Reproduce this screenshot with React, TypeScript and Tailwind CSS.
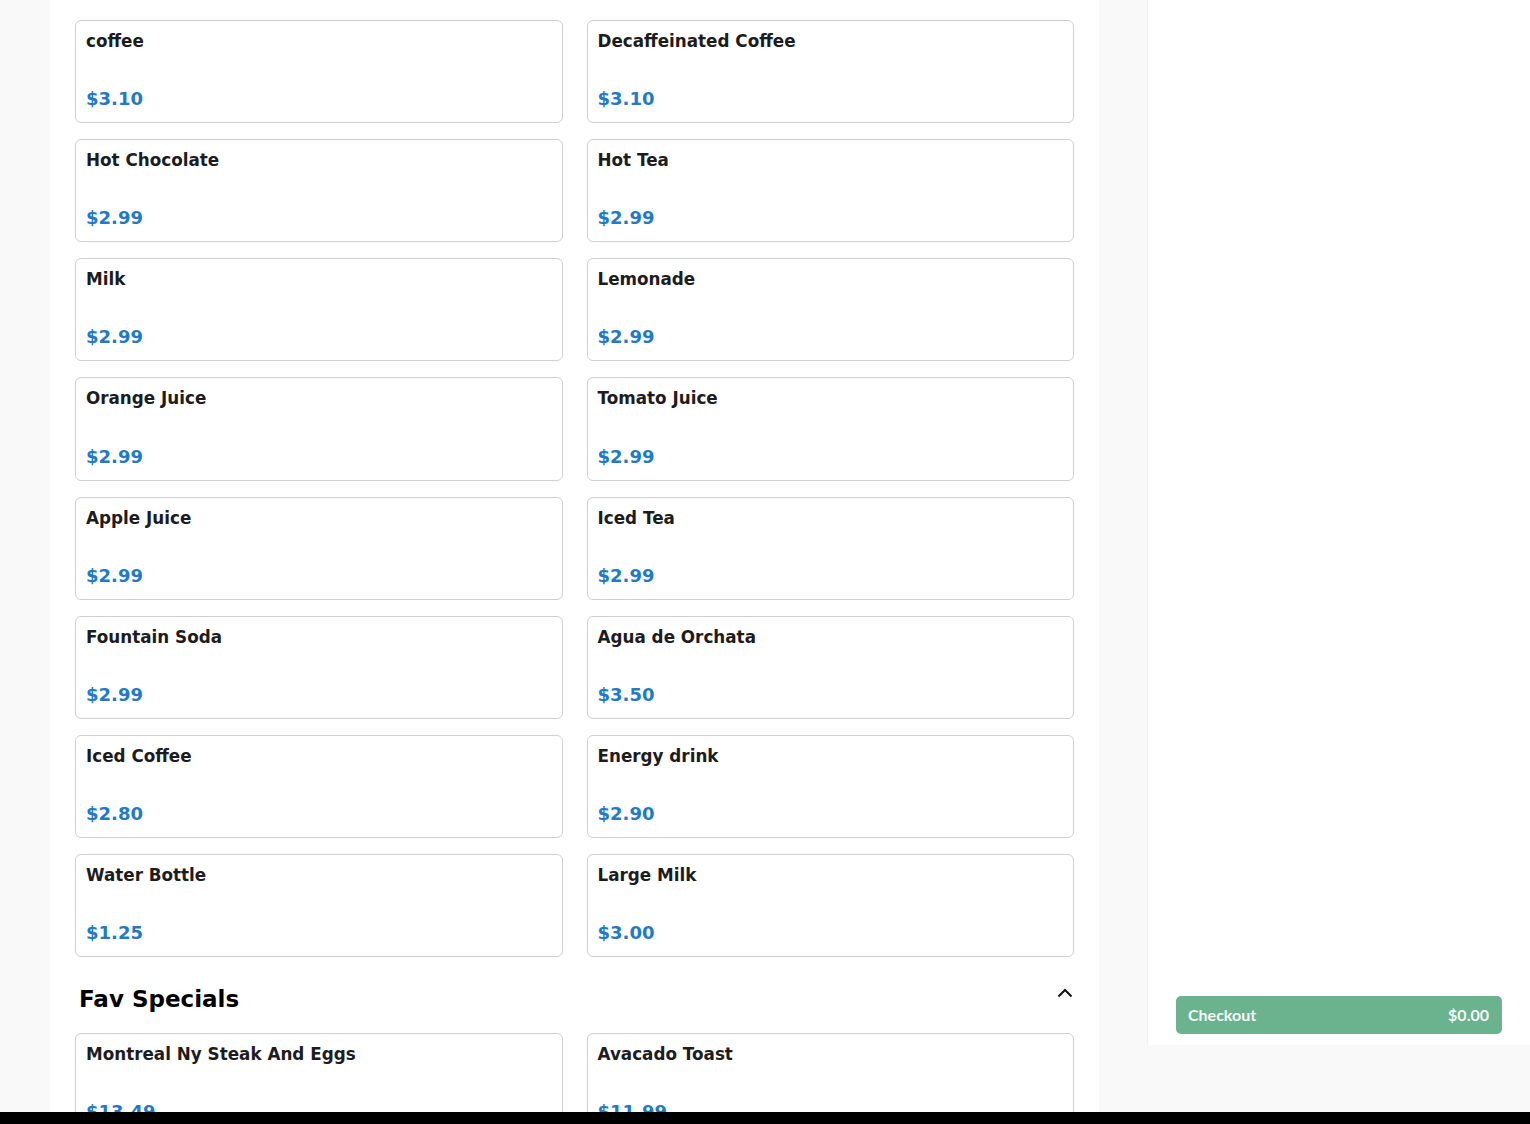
import { ReactNode } from 'react';

const drinks = [
  { name: 'coffee', price: '$3.10' },
  { name: 'Decaffeinated Coffee', price: '$3.10' },
  { name: 'Hot Chocolate', price: '$2.99' },
  { name: 'Hot Tea', price: '$2.99' },
  { name: 'Milk', price: '$2.99' },
  { name: 'Lemonade', price: '$2.99' },
  { name: 'Orange Juice', price: '$2.99' },
  { name: 'Tomato Juice', price: '$2.99' },
  { name: 'Apple Juice', price: '$2.99' },
  { name: 'Iced Tea', price: '$2.99' },
  { name: 'Fountain Soda', price: '$2.99' },
  { name: 'Agua de Orchata', price: '$3.50' },
  { name: 'Iced Coffee', price: '$2.80' },
  { name: 'Energy drink', price: '$2.90' },
  { name: 'Water Bottle', price: '$1.25' },
  { name: 'Large Milk', price: '$3.00' },
];

const specials = [
  { name: 'Montreal Ny Steak And Eggs', price: '$13.49' },
  { name: 'Avacado Toast', price: '$11.99' },
];

function ItemCard({ name, price }: { name: string; price: string }) {
  return (
    <button className="h-[103.15px] flex flex-col justify-between text-left bg-white border border-[#cfcfcf] rounded-[6px] px-[10px] pt-[8px] pb-[11px]">
      <span className="text-[16.8px] leading-[24px] font-bold text-[#1c1c1e]">{name}</span>
      <span className="text-[18px] leading-[24px] font-bold text-[#2279c8]">{price}</span>
    </button>
  );
}

function Grid({ children }: { children: ReactNode }) {
  return <div className="grid grid-cols-2 gap-x-[24px] gap-y-[16px]">{children}</div>;
}

export default function App() {
  return (
    <div className="h-screen flex flex-col bg-[#f9f9f9]" style={{ fontFamily: '"DejaVu Sans", sans-serif' }}>
      <div className="flex-1 min-h-0 flex">
        <div className="w-[50px] shrink-0" />
        <main className="w-[1049px] shrink-0 bg-white px-[25px] pt-[20px] overflow-hidden">
          <Grid>
            {drinks.map((d) => (
              <ItemCard key={d.name} {...d} />
            ))}
          </Grid>
          <div className="flex items-start justify-between pl-[4px] pr-[1px] mt-[26px] mb-[18px]">
            <h2 className="text-[23px] leading-[32px] font-bold text-black">Fav Specials</h2>
            <svg width="16" height="10" viewBox="0 0 16 10" className="mt-[5px]">
              <path d="M1.5 8.5 L8 2 L14.5 8.5" stroke="#111" strokeWidth="2" fill="none" />
            </svg>
          </div>
          <Grid>
            {specials.map((d) => (
              <ItemCard key={d.name} {...d} />
            ))}
          </Grid>
        </main>
        <div className="w-[48px] shrink-0" />
        <aside className="w-[383px] shrink-0 h-[1045px] bg-white border-l border-[#f0f0f0] flex flex-col justify-end pl-[28px] pr-[28px] pb-[11px]">
          <button
            className="h-[38px] w-full rounded-[5px] bg-[#6bb28f] flex items-center justify-between pl-[12px] pr-[13px] text-[#f4faf6] text-[16px] font-bold"
            style={{ fontFamily: 'Lato, "Noto Sans", sans-serif' }}
          >
            <span>Checkout</span>
            <span>$0.00</span>
          </button>
        </aside>
      </div>
      <div className="h-[12px] bg-black shrink-0" />
    </div>
  );
}
